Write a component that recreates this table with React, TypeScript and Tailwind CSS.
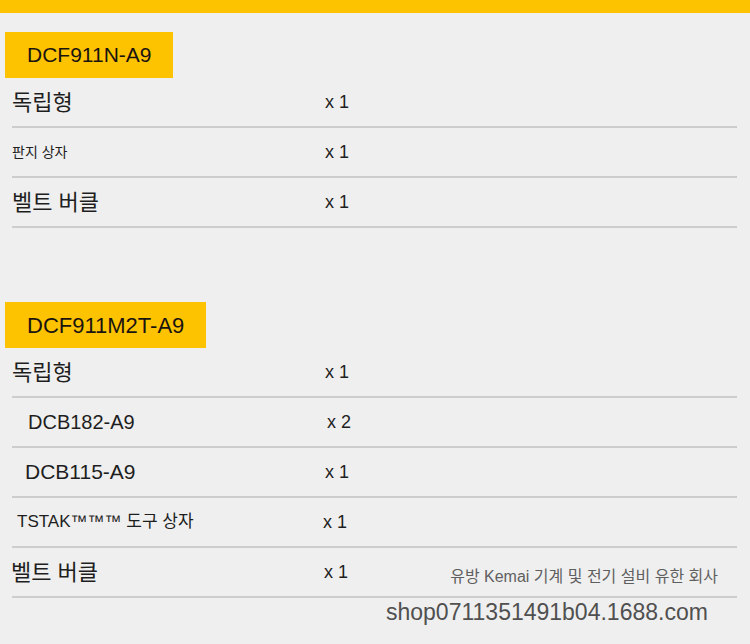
import React from 'react';

interface Item {
  name: string;
  qty: string;
  labelClass: string;
  qtyClass?: string;
  note?: string;
}

const groups: { model: string; modelClass: string; items: Item[] }[] = [
  {
    model: 'DCF911N-A9',
    modelClass: 'text-[21px]',
    items: [
      { name: '독립형', qty: 'x 1', labelClass: 'text-[22px]' },
      { name: '판지 상자', qty: 'x 1', labelClass: 'text-[14px]' },
      { name: '벨트 버클', qty: 'x 1', labelClass: 'text-[22px]' },
    ],
  },
  {
    model: 'DCF911M2T-A9',
    modelClass: 'text-[22px]',
    items: [
      { name: '독립형', qty: 'x 1', labelClass: 'text-[22px]' },
      { name: 'DCB182-A9', qty: 'x 2', labelClass: 'text-[20px] pl-[16px]', qtyClass: 'pl-[2px]' },
      { name: 'DCB115-A9', qty: 'x 1', labelClass: 'text-[21px] pl-[13px]' },
      { name: 'TSTAK™™™ 도구 상자', qty: 'x 1', labelClass: 'text-[17px] pl-[5px]', qtyClass: '-ml-[2px]' },
      {
        name: '벨트 버클',
        qty: 'x 1',
        labelClass: 'text-[22px] -ml-[1px]',
        note: '유방 Kemai 기계 및 전기 설비 유한 회사',
      },
    ],
  },
];

const Row: React.FC<{ item: Item }> = ({ item }) => (
  <div className="ml-[12px] mr-[13px] flex h-[50px] items-center border-b-2 border-[#cdcdcd] text-[#1e1e1e]">
    <span className={`w-[313px] shrink-0 whitespace-nowrap ${item.labelClass}`}>{item.name}</span>
    <span className={`text-[18px] ${item.qtyClass ?? ''}`}>{item.qty}</span>
    {item.note && (
      <span className="ml-auto mr-[19px] mt-[9px] text-[16px] text-[#5f5f5f]">{item.note}</span>
    )}
  </div>
);

export default function App() {
  return (
    <div
      className="h-[644px] w-[750px] overflow-hidden bg-[#efefef]"
      style={{ fontFamily: '"Liberation Sans", "Noto Sans CJK KR", sans-serif' }}
    >
      {/* top banner, cut off */}
      <div className="h-[13px] bg-[#fec300]" />

      <div className="flex flex-col gap-[74px] pt-[19px]">
        {groups.map(group => (
          <div key={group.model} className="flex flex-col">
            <div
              className={`ml-[5px] flex h-[46px] items-center self-start bg-[#fec300] px-[22px] text-[#1a1410] ${group.modelClass}`}
            >
              {group.model}
            </div>
            {group.items.map(item => (
              <Row key={item.name + item.qty} item={item} />
            ))}
          </div>
        ))}
      </div>

      <div className="-mt-[2px] pl-[386px] text-[23px] leading-[32px] text-[#505050]">
        shop0711351491b04.1688.com
      </div>
    </div>
  );
}
